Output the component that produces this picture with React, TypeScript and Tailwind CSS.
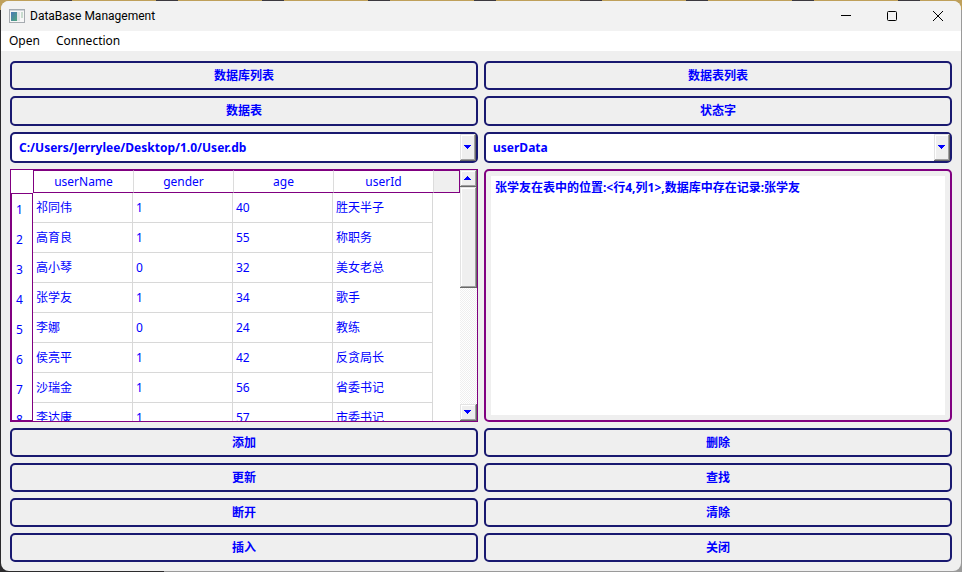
import React from "react";

const rows = [
  ["祁同伟", "1", "40", "胜天半子"],
  ["高育良", "1", "55", "称职务"],
  ["高小琴", "0", "32", "美女老总"],
  ["张学友", "1", "34", "歌手"],
  ["李娜", "0", "24", "教练"],
  ["侯亮平", "1", "42", "反贪局长"],
  ["沙瑞金", "1", "56", "省委书记"],
  ["李达康", "1", "57", "市委书记"],
];

const columns = ["userName", "gender", "age", "userId"];

const bevel =
  "bg-[#efefef] shadow-[inset_-1px_-1px_0_#696969,inset_1px_1px_0_#e3e3e3,inset_-2px_-2px_0_#a0a0a0,inset_2px_2px_0_#ffffff]";

function PushButton({ children }: { children: React.ReactNode }) {
  return (
    <button
      type="button"
      className="flex h-full w-full items-center justify-center rounded-[5px] border-2 border-[#191970] bg-[#efefef] text-xs font-bold text-[#0000ff]"
    >
      {children}
    </button>
  );
}

function Triangle({ up = false }: { up?: boolean }) {
  return (
    <svg width="7" height="4" viewBox="0 0 7 4" fill="#0000ff" shapeRendering="crispEdges" aria-hidden="true">
      {up ? (
        <path d="M3 0h1v1h1v1h1v1h1v1H0V3h1V2h1V1h1z" />
      ) : (
        <path d="M0 0h7v1H6v1H5v1H4v1H3V3H2V2H1V1H0z" />
      )}
    </svg>
  );
}

function ComboBox({ label, value }: { label: string; value: string }) {
  return (
    <div className="relative min-w-0">
      <select
        aria-label={label}
        defaultValue={value}
        className="h-full w-full appearance-none rounded-[5px] border-2 border-[#191970] bg-white pr-5 pl-[7px] text-xs font-bold text-[#0000ff]"
      >
        <option>{value}</option>
      </select>
      <span
        className={`pointer-events-none absolute top-0.5 right-0.5 bottom-0.5 flex w-4 items-center justify-center pr-0.5 pb-0.5 ${bevel}`}
      >
        <Triangle />
      </span>
    </div>
  );
}

function TableView() {
  return (
    <div className="flex min-h-0 min-w-0 border border-[#800080] bg-white">
      <div className="relative min-w-0 flex-1 overflow-hidden">
        <table className="w-full table-fixed border-separate border-spacing-0 text-xs text-[#0000ff]">
          <colgroup>
            <col className="w-[22px]" />
            <col className="w-[100px]" />
            <col className="w-[100px]" />
            <col className="w-[100px]" />
            <col className="w-[100px]" />
            <col />
          </colgroup>
          <thead>
            <tr className="h-[23px]">
              <td />
              {columns.map((name, i) => (
                <th
                  key={name}
                  scope="col"
                  className={`h-[23px] border-y border-l border-y-[#800080] p-0 text-center text-xs leading-5 font-normal ${
                    i === 0 ? "border-l-[#800080]" : "border-l-[#dcdcdc]"
                  }`}
                >
                  {name}
                </th>
              ))}
              <td className="border-y border-r border-l border-y-[#800080] border-r-[#800080] border-l-[#dcdcdc] bg-[#efefef] p-0" />
            </tr>
          </thead>
          <tbody>
            {rows.map((row, i) => (
              <tr key={row[0]} className="h-[30px]">
                <th
                  scope="row"
                  className={`h-[30px] border-x border-[#800080] px-1 pb-0 text-left font-normal ${
                    i === 0 ? "border-t pt-0.5" : "pt-1"
                  }`}
                >
                  {i + 1}
                </th>
                {row.map((cell, j) => (
                  <td key={j} className="border-r border-b border-[#d8d8d8] py-0 pr-0 pl-[3px]">
                    {cell}
                  </td>
                ))}
                <td />
              </tr>
            ))}
          </tbody>
        </table>
        <div className="absolute bottom-0 left-0 w-[22px] border-b border-[#800080]" />
      </div>
      <div className="flex w-[17px] flex-col bg-[repeating-conic-gradient(#ffffff_0_25%,#efefef_0_50%)] bg-[length:2px_2px]">
        <button
          type="button"
          aria-label="Scroll up"
          className={`flex h-[17px] w-full items-center justify-center pr-0.5 pb-0.5 ${bevel}`}
        >
          <Triangle up />
        </button>
        <div className={`h-[101px] ${bevel}`} />
        <div className="flex-1" />
        <button
          type="button"
          aria-label="Scroll down"
          className={`flex h-[17px] w-full items-center justify-center pr-0.5 pb-0.5 ${bevel}`}
        >
          <Triangle />
        </button>
      </div>
    </div>
  );
}

export default function App() {
  return (
    <div className="h-screen bg-[linear-gradient(90deg,#2c2b2d_17%,#9a9a9a_17%)] font-['Noto_Sans','Noto_Sans_CJK_SC',sans-serif]">
      <div className="h-full bg-[repeating-linear-gradient(90deg,#bfa05a_0_50px,#3c393f_50px_72px,#bfa05a_72px_106px)] bg-[length:100%_10px] bg-no-repeat p-px">
        <main className="flex h-full flex-col overflow-hidden rounded-lg bg-[#efefef]">
          <header className="flex h-[30px] shrink-0 items-center bg-[#f2f2f2] pl-2">
            <svg width="16" height="14" viewBox="0 0 16 14" aria-hidden="true">
              <defs>
                <linearGradient id="pane" x1="0" y1="0" x2="1" y2="1">
                  <stop offset="0" stopColor="#4a78b8" />
                  <stop offset="1" stopColor="#4fa67c" />
                </linearGradient>
              </defs>
              <rect x="0.5" y="0.5" width="15" height="13" fill="#f7f7f7" stroke="#a6abb0" />
              <rect x="1" y="1" width="14" height="1" fill="#cfd4d9" />
              <rect x="2" y="3" width="6" height="9" fill="url(#pane)" />
              <rect x="8" y="3" width="3" height="9" fill="#e1e4e6" />
              <rect x="12" y="3" width="2" height="6" fill="#c9dccf" />
            </svg>
            <h1 className="ml-[5px] flex-1 font-[Roboto,sans-serif] text-xs text-black">DataBase Management</h1>
            <button type="button" aria-label="Minimize" className="flex h-full w-[46px] items-center justify-center">
              <svg width="10" height="10" viewBox="0 0 10 10" aria-hidden="true">
                <path d="M0 4.5h10" stroke="#000" />
              </svg>
            </button>
            <button type="button" aria-label="Maximize" className="flex h-full w-[46px] items-center justify-center">
              <svg width="10" height="10" viewBox="0 0 10 10" fill="none" aria-hidden="true">
                <rect x="0.5" y="0.5" width="9" height="9" rx="1" stroke="#000" />
              </svg>
            </button>
            <button type="button" aria-label="Close" className="flex h-full w-[46px] items-center justify-center">
              <svg width="10" height="10" viewBox="0 0 10 10" aria-hidden="true">
                <path d="M0 0l10 10M10 0L0 10" stroke="#000" />
              </svg>
            </button>
          </header>
          <nav className="flex h-5 shrink-0 items-center gap-4 bg-white pl-2 text-xs leading-5 text-black">
            <button type="button">Open</button>
            <button type="button">Connection</button>
          </nav>
          <div className="grid min-h-0 flex-1 grid-cols-2 grid-rows-[29px_30px_31px_minmax(0,1fr)_29px_29px_29px_29px] gap-1.5 px-[9px] pt-2.5 pb-[9px]">
            <PushButton>数据库列表</PushButton>
            <PushButton>数据表列表</PushButton>
            <PushButton>数据表</PushButton>
            <PushButton>状态字</PushButton>
            <ComboBox label="数据库列表" value="C:/Users/Jerrylee/Desktop/1.0/User.db" />
            <ComboBox label="数据表列表" value="userData" />
            <TableView />
            <div className="flex min-w-0 rounded-[5px] border-2 border-[#800080] bg-[#efefef] p-[5px]">
              <textarea
                aria-label="状态字"
                readOnly
                defaultValue="张学友在表中的位置:<行4,列1>,数据库中存在记录:张学友"
                className="w-full resize-none bg-white px-1 py-0.5 text-xs leading-5 font-bold text-[#0000ff] outline-none"
              />
            </div>
            <PushButton>添加</PushButton>
            <PushButton>删除</PushButton>
            <PushButton>更新</PushButton>
            <PushButton>查找</PushButton>
            <PushButton>断开</PushButton>
            <PushButton>清除</PushButton>
            <PushButton>插入</PushButton>
            <PushButton>关闭</PushButton>
          </div>
        </main>
      </div>
    </div>
  );
}
